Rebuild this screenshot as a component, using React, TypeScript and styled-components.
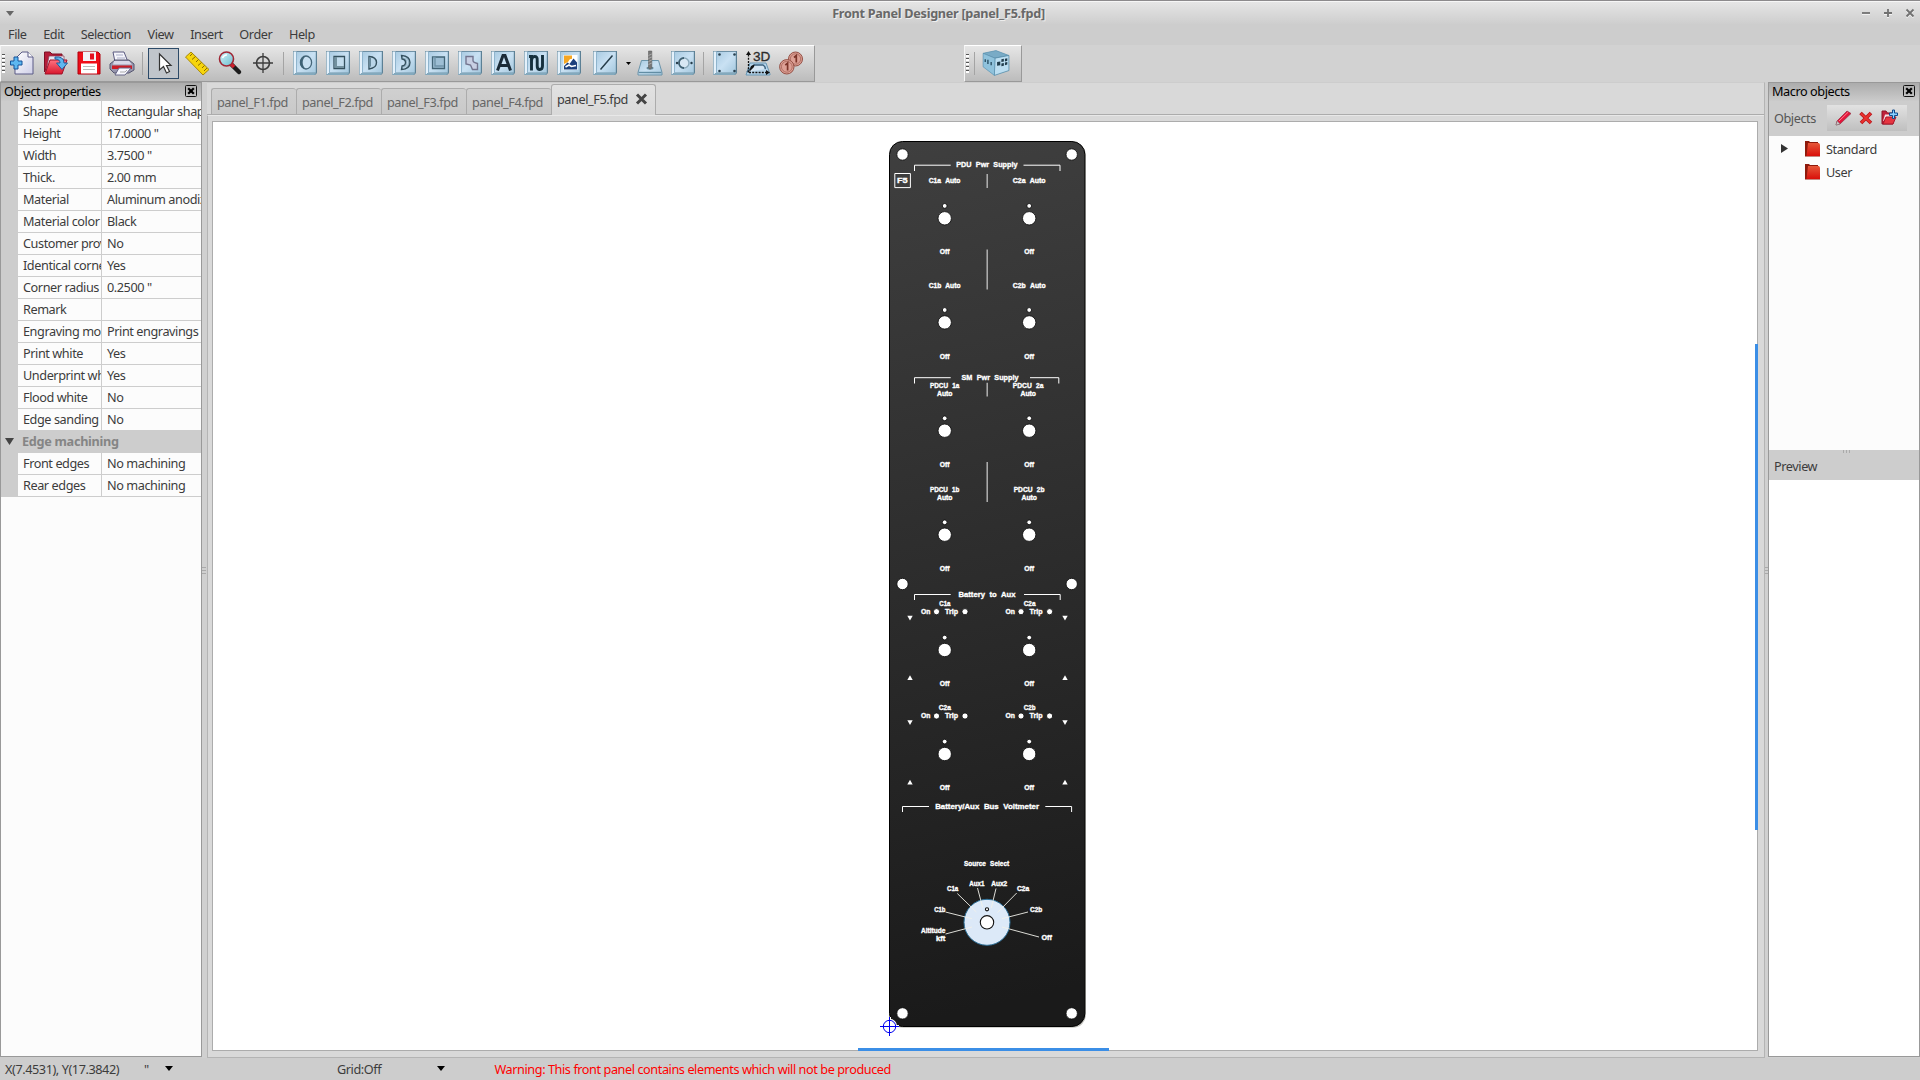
import React from 'react';
import styled, { createGlobalStyle, css } from 'styled-components';

const Global = createGlobalStyle`
  * { box-sizing: border-box; }
  body { margin: 0; background: #cdcdcd; overflow: hidden; }
`;

const Window = styled.div`
  width: 1920px;
  height: 1080px;
  display: flex;
  flex-direction: column;
  background: #cdcdcd;
  color: #3c3c3c;
  font: 12.7px/18px 'Noto Sans', 'Open Sans', sans-serif;
  letter-spacing: -0.43px;
  white-space: nowrap;
`;

const TitleBar = styled.header`
  height: 24px;
  flex: none;
  display: grid;
  grid-template-columns: 120px 1fr 163px;
  align-items: center;
  border-top: 1px solid #8c8a8c;
  box-shadow: inset 0 1px 0 #f6f6f6;
  background: linear-gradient(#e6e6e6, #cecece);
  padding-top: 1px;
`;
const TitleText = styled.h1`
  margin: 0;
  text-align: center;
  font-size: 12.7px;
  letter-spacing: -0.3px;
  line-height: 18px;
  font-weight: 700;
  color: #686868;
  text-shadow: 1px 1px 0 #efefef;
`;
const WindowButtons = styled.div`
  display: flex;
  justify-content: flex-end;
  gap: 12px;
  padding-right: 5px;
`;

const MenuBar = styled.nav`
  height: 21px;
  flex: none;
  display: flex;
  gap: 16.6px;
  padding: 1px 8px 0;
`;
const MenuItem = styled.span``;

const ToolArea = styled.div`
  height: 37px;
  flex: none;
  display: flex;
  gap: 149px;
  background: #d2d2d2;
`;
const ToolBar = styled.div<{ $width: number }>`
  width: ${(p) => p.$width}px;
  display: flex;
  align-items: center;
  border-top: 1px solid #fff;
  border-left: 1px solid #f4f4f4;
  border-right: 1px solid #999;
  border-bottom: 1px solid #999;
  background: linear-gradient(#e6e6e6, #bcbcbc);
  padding: 0 0 1px 1px;
`;
const Grip = styled.i`
  width: 3px;
  height: 19px;
  margin-right: 1px;
  background: repeating-linear-gradient(#555 0 1px, #fff 1px 3px, transparent 3px 4px);
`;
const Divider = styled.i<{ $space?: number }>`
  width: 1px;
  height: 23px;
  margin: 0 ${(p) => p.$space ?? 4}px;
  background: #a4a4a4;
`;
const ToolButton = styled.span<{ $active?: boolean; $width?: number }>`
  width: ${(p) => p.$width ?? 33}px;
  height: 31px;
  flex: none;
  display: flex;
  align-items: center;
  justify-content: center;
  ${(p) =>
    p.$active &&
    css`
      width: 31px;
      margin: 0 1px;
      border: 1px solid #2c4a68;
      background: #c0c5cb;
    `}
`;

const Main = styled.main`
  flex: 1;
  min-height: 0;
  display: grid;
  grid-template-columns: 202px 1563px 155px;
`;
const Dock = styled.section`
  height: 975px;
  display: flex;
  flex-direction: column;
  border: 1px solid #999;
  background: #fcfcfc;
  min-width: 0;
`;
const DockTitle = styled.h2`
  margin: 0;
  height: 18px;
  flex: none;
  display: flex;
  justify-content: space-between;
  align-items: center;
  padding: 0 4px 2px 3px;
  font-size: 12.7px;
  font-weight: 400;
  line-height: 16px;
  color: #000;
  background: linear-gradient(#acacac, #cbcbcb);
`;

const PropertyRow = styled.div`
  height: 22px;
  flex: none;
  display: grid;
  grid-template-columns: 17px 83px 1fr;
  background: #cdcdcd;
`;
const Cell = styled.span`
  overflow: hidden;
  padding-left: 5px;
  line-height: 20px;
  background: #fcfcfc;
  border-bottom: 1px solid #cdcdcd;
  & + & { border-left: 1px solid #cdcdcd; }
`;
const GroupRow = styled.div`
  height: 22px;
  flex: none;
  display: grid;
  grid-template-columns: 21px 1fr;
  line-height: 21px;
  font-weight: 700;
  letter-spacing: -0.3px;
  color: #858585;
  background: #cdcdcd;
`;
const GroupArrow = styled.span`
  padding: 7px 0 0 4px;
  line-height: 0;
`;

const Workspace = styled.section`
  display: grid;
  grid-template-columns: 5px 1558px;
  height: 976px;
  background: #d0d0d0;
`;
const SplitHandle = styled.span`
  align-self: center;
  width: 4px;
  height: 7px;
  background: repeating-linear-gradient(#aaa 0 1px, transparent 1px 3px);
`;
const Notebook = styled.div`
  display: flex;
  flex-direction: column;
  background: #d9d9d9;
  border-right: 1px solid #b4b4b4;
  border-bottom: 1px solid #b4b4b4;
  border-top: 1px solid #cdcdcd;
`;
const Tabs = styled.div`
  height: 32px;
  flex: none;
  display: flex;
  align-items: flex-end;
  padding-left: 4px;
  border-bottom: 1px solid #acacac;
`;
const Tab = styled.span<{ $current?: boolean }>`
  width: ${(p) => (p.$current ? 105 : 85)}px;
  height: ${(p) => (p.$current ? 31 : 26)}px;
  margin-bottom: ${(p) => (p.$current ? -1 : 0)}px;
  display: flex;
  align-items: center;
  gap: 7px;
  padding: 0 0 ${(p) => (p.$current ? 2 : 0)}px 5px;
  border: 1px solid #acacac;
  border-bottom: 0;
  border-right-width: ${(p) => (p.$current ? 1 : 0)}px;
  border-radius: 3px 3px 0 0;
  color: ${(p) => (p.$current ? '#3c3c3c' : '#666')};
  background: ${(p) => (p.$current ? 'linear-gradient(#e2e2e2, #d9d9d9)' : 'linear-gradient(#d0d0d0, #c9c9c9)')};
`;
const CanvasFrame = styled.div`
  flex: 1;
  padding: 5px 7px 6px 5px;
  border-left: 1px solid #b4b4b4;
  border-top: 1px solid #e8e8e8;
`;
const Canvas = styled.div`
  height: 930px;
  width: 1546px;
  margin-left: -1px;
  border: 1px solid #acacac;
  background: #fff;
  position: relative;
`;
const ScrollBar = styled.i<{ $vertical?: boolean }>`
  position: absolute;
  background: #3b8ee6;
  ${(p) => (p.$vertical ? 'right:-1px; top:222px; width:3px; height:486px;' : 'left:645px; bottom:-1px; width:251px; height:3px;')}
`;

const MacroWrap = styled.aside`
  display: grid;
  grid-template-columns: 3px 152px;
  background: #d0d0d0;
  height: 976px;
`;
const MacroTools = styled.div`
  height: 35px;
  flex: none;
  display: flex;
  align-items: center;
  justify-content: space-between;
  padding: 0 12px 2px 5px;
  background: #cdcdcd;
  color: #555;
`;
const MacroButtons = styled.div`
  width: 80px;
  height: 26px;
  display: flex;
  align-items: center;
  justify-content: space-around;
  padding: 0 4px;
  background: linear-gradient(#e2e2e2, #bfbfbf);
`;
const Tree = styled.div`
  height: 314px;
  flex: none;
  padding-top: 1px;
  background: #fcfcfc;
`;
const TreeRow = styled.div`
  height: 23px;
  display: grid;
  grid-template-columns: 36px 21px 1fr;
  align-items: center;
`;
const TreeArrow = styled.span`
  padding-left: 12px;
  line-height: 0;
`;
const PreviewHead = styled.div`
  height: 30px;
  flex: none;
  display: flex;
  flex-direction: column;
  padding-left: 5px;
  background: #cdcdcd;
`;
const PreviewGrip = styled.i`
  align-self: center;
  width: 7px;
  height: 3px;
  margin-bottom: 4px;
  background: repeating-linear-gradient(90deg, #aaa 0 1px, transparent 1px 3px);
`;
const Preview = styled.div`
  flex: 1;
  background: #fff;
`;

const StatusBar = styled.footer`
  height: 22px;
  flex: none;
  display: grid;
  grid-template-columns: 138px 35px 159px 100px 57.5px 1fr;
  align-items: center;
  padding: 0 0 1px 5px;
  line-height: 20px;
`;
const UnitSelect = styled.span`
  display: flex;
  align-items: center;
  justify-content: space-between;
  width: 30px;
  padding-left: 1px;
`;
const Warning = styled.span`
  color: #f00;
`;

const Tri = ({ w = 7, h = 5, right = false, color = '#000' }: { w?: number; h?: number; right?: boolean; color?: string }) => (
  <svg width={w} height={h} viewBox="0 0 10 10" preserveAspectRatio="none">
    <path d={right ? 'M0 0 10 5 0 10z' : 'M0 0H10L5 10z'} fill={color} />
  </svg>
);

const DockClose = () => (
  <svg width="12" height="12" viewBox="0 0 12 12">
    <rect x=".5" y=".5" width="11" height="11" rx="1" fill="none" stroke="#111" />
    <path d="M3.2 3.2l5.6 5.6M8.8 3.2 3.2 8.8" stroke="#000" strokeWidth="2.2" />
  </svg>
);

const Ico = ({ children, size = 26 }: { children: React.ReactNode; size?: number }) => (
  <svg width={size} height={size} viewBox="0 0 26 26">
    {children}
  </svg>
);

const Plate = ({ children }: { children: React.ReactNode }) => (
  <Ico>
    <path d="M1 1H25V23L23 25H1z" fill="#5c8095" />
    <path d="M1.5 1.5H4.5V22.5L1.5 25z" fill="#e4f1fb" />
    <path d="M1.5 25 4.5 22.5H24.5L22.5 25z" fill="#83a9bd" />
    <path d="M4.5 1.8H23.8V22.5H4.5z" fill="url(#plate)" />
    <path d="M4.5 1.8V22.5" stroke="#8fb4cd" />
    {children}
  </Ico>
);

const icons: Record<string, React.ReactNode> = {
  new: (
    <Ico>
      <path d="M12 2H18L23 7V24H5V9z" fill="url(#paper)" stroke="#5b5b86" />
      <path d="M18 2V7H23" fill="#fff" stroke="#5b5b86" />
      <path d="M4 7H8V11H12V15H8V19H4V15H.5V11H4z" fill="#5db7f0" stroke="#14539a" />
    </Ico>
  ),
  open: (
    <Ico>
      <path d="M1.5 22V2H7L9 4H19V8H8z" fill="#b51c38" stroke="#7d1025" />
      <path d="M3 22 6 6H21V10L8 12z" fill="#e9e9f4" stroke="#8a3a50" strokeWidth=".7" />
      <path d="M2 24 7 10H24L19 24z" fill="url(#red)" stroke="#a01028" />
      <path d="M12 7Q21 6 21 13H24.500L19 19.500 13.500 13H17Q17 9 12 9z" fill="#5fb7ef" stroke="#1e5c9c" />
    </Ico>
  ),
  save: (
    <Ico>
      <path d="M2 2H22L24 4V24H2z" fill="#ef0d18" stroke="#b0000c" />
      <path d="M7 2H20V11H7z" fill="#f2f2f6" />
      <path d="M14 3.500H18V9.500H14z" fill="#e51020" />
      <path d="M5 13.500H21V23.500H5z" fill="#fff" />
      <path d="M7 16.500H19M7 19.500H19" stroke="#bbb" />
    </Ico>
  ),
  print: (
    <Ico>
      <path d="M6 12 4 2H15L19 12z" fill="#f5f5fb" stroke="#5a5a80" />
      <path d="M7 5H14M8 8H16" stroke="#aaaec8" />
      <path d="M1 14 6 10H20L25 14V20L20 23H5L1 19z" fill="#9797ae" stroke="#55556e" />
      <path d="M5 11H20L23 14.500H4z" fill="#d8d8e8" />
      <path d="M3 15.500H23V19H3z" fill="#cc1c26" />
      <path d="M10 18H22L16 25H6z" fill="#f8f8ff" stroke="#666687" />
      <path d="M11 22H16L18 20" stroke="#aaa" fill="none" />
    </Ico>
  ),
  cursor: (
    <Ico>
      <path d="M8.500 4V20L12.500 16.500 15.500 23 18.500 21.500 15.500 15.500H20z" fill="#fff" stroke="#333" strokeWidth="1.200" />
    </Ico>
  ),
  ruler: (
    <Ico>
      <path d="M1.500 7 7 2 25 19.500 19 25z" fill="#f6d50d" stroke="#a9890a" />
      <path d="M8.500 3.500 6 6M11.500 6.500 8 9.500M14.500 9.500 12 12M17.500 12.500 14 15.500M20.500 15.500 18 18M23 18 20 21" stroke="#8a6c00" />
    </Ico>
  ),
  zoom: (
    <Ico>
      <path d="M14 14 22 22" stroke="#1c1c1c" strokeWidth="4.500" strokeLinecap="round" />
      <path d="M13.500 13.500 17 17" stroke="#d01e2c" strokeWidth="3.500" />
      <circle cx="9.500" cy="9" r="7" fill="url(#lens)" stroke="#a02634" strokeWidth="1.600" />
      <path d="M5.500 8Q7 4.500 10 5" stroke="#fff" strokeWidth="1.500" fill="none" />
    </Ico>
  ),
  target: (
    <Ico>
      <circle cx="13" cy="13" r="6.500" fill="none" stroke="#3c3c3c" strokeWidth="1.600" />
      <path d="M13 3V23M3 13H23" stroke="#3c3c3c" strokeWidth="1.300" />
    </Ico>
  ),
  circle: (
    <Plate>
      <ellipse cx="14" cy="12.500" rx="5.600" ry="6.500" fill="#c9e0f1" stroke="#456679" strokeWidth="1.300" />
      <path d="M14 6A6 6.500 0 0 0 14 19 8 8 0 0 1 14 6" fill="#3f6275" />
    </Plate>
  ),
  square: (
    <Plate>
      <path d="M9 6.500H19.500V18.500H9z" fill="#c2dced" stroke="#34505e" strokeWidth="1.300" />
      <path d="M9.500 7H12V16H19V18H9.500z" fill="#73919f" />
    </Plate>
  ),
  dshape: (
    <Plate>
      <path d="M11 6.500Q18.500 7 18.500 12.500T11 19z" fill="#b9d5e8" stroke="#34505e" strokeWidth="1.400" />
      <path d="M11 7V18.500L13 16V8z" fill="#68899b" />
    </Plate>
  ),
  arc: (
    <Plate>
      <path d="M10.500 5.500Q19 6 19 12.500T10.500 19.500L11 16Q14.500 15.500 14.500 12.500T11 9z" fill="#91b1c4" stroke="#34505e" strokeWidth="1.300" />
      <path d="M12 7Q17 8 16.500 13T12 18" fill="none" stroke="#c3dcec" strokeWidth="1" />
    </Plate>
  ),
  pocket: (
    <Plate>
      <path d="M8.500 7H20.500V18.500H8.500z" fill="#9dbed4" stroke="#426476" strokeWidth="1.300" />
      <path d="M9 7.500H11V16H20" stroke="#6f93a8" fill="none" strokeWidth="1.400" />
    </Plate>
  ),
  freeform: (
    <Plate>
      <path d="M9 6.500H16V10.500Q16 12.500 20.500 13.500V19.500H15.500L13.500 15 9 14z" fill="#c8cfe3" stroke="#73758f" strokeWidth="1.400" />
    </Plate>
  ),
  text: (
    <Plate>
      <path d="M7.500 20.500 13 5.500H15L20.500 20.500M9.500 15.500H18.500" fill="none" stroke="#1b2b38" strokeWidth="3" />
    </Plate>
  ),
  curve: (
    <Plate>
      <path d="M6 6.500H8.500V20.500M8.500 12Q8.500 6.500 11.500 6.500T14.200 10V16Q14.200 19.500 16.800 19.500T19.500 16V5" fill="none" stroke="#15303d" strokeWidth="2.900" />
    </Plate>
  ),
  image: (
    <Plate>
      <path d="M7.500 5H21.500V20H7.500z" fill="#fff" />
      <path d="M8 5.500H16V9Q14 8 12 12L8 14z" fill="#f5a623" />
      <path d="M8 19.500V16L11.500 12.500 13.500 14 17.500 8.500 21 12.500V19.500z" fill="#1c3f7c" />
      <path d="M9.500 17 13 15 15.500 16.500 20 15.500" stroke="#fff" strokeWidth="1.600" fill="none" />
    </Plate>
  ),
  line: (
    <Plate>
      <path d="M8.500 19.500 20.500 5.500" stroke="#263d4a" strokeWidth="1.500" />
    </Plate>
  ),
  drill: (
    <Ico>
      <path d="M4.500 10.500H21.500L25 22.500V25H1V22.500z" fill="url(#plate)" stroke="#6b94aa" />
      <path d="M1.500 22.500H24.500" stroke="#628da4" strokeWidth="1.400" />
      <ellipse cx="13" cy="18" rx="3.500" ry="1.500" fill="#68899a" />
      <path d="M11.500 1H14.800V17.500L13 19.500 11.500 17.500z" fill="#777" stroke="#555" strokeWidth=".5" />
      <path d="M11.500 5.500 14.800 4M11.500 8.500 14.800 7M11.500 11.500 14.800 10M11.500 14.500 14.800 13" stroke="#aaa" />
    </Ico>
  ),
  hole: (
    <Plate>
      <circle cx="14" cy="13" r="5" fill="#d8e8f4" stroke="#8aa9bb" strokeWidth="1.400" />
      <path d="M14 8A5 5 0 0 0 14 18" fill="none" stroke="#3f6072" strokeWidth="1.800" />
      <circle cx="7" cy="13" r="1.200" fill="#263d4a" />
      <circle cx="21.500" cy="13" r="1.200" fill="#263d4a" />
    </Plate>
  ),
  corners: (
    <Plate>
      <g fill="#29404f">
        <circle cx="7.500" cy="4.500" r="1.300" />
        <circle cx="22.500" cy="4.500" r="1.300" />
        <circle cx="7.500" cy="21" r="1.300" />
        <circle cx="22.500" cy="21" r="1.300" />
      </g>
    </Plate>
  ),
  threeD: (
    <Ico>
      <path d="M5 13H21L25 24V25H1z" fill="#b5d3e9" stroke="#6898b5" />
      <path d="M2 22 9 15H18Q21 17 20 19" fill="#d6e6f3" stroke="#3c6380" strokeWidth="1.500" />
      <path d="M3.500 22.500V4M4 22.500H22" stroke="#111" strokeWidth="1.300" strokeDasharray="2 1.200" />
      <path d="M3.500 1 6 5H1zM25 22.500 21 20V25zM4 22 9 17 9.500 14.500 6 16z" fill="#111" />
      <text x="8" y="10.600" fontFamily="Liberation Sans, sans-serif" fontSize="13.500" letterSpacing="0" fill="#2b2b2b" stroke="#2b2b2b" strokeWidth=".3">3D</text>
    </Ico>
  ),
  coins: (
    <Ico>
      <g fill="#dda095" stroke="#955045">
        <circle cx="17.500" cy="9" r="7" />
        <circle cx="17.500" cy="9" r="5.200" strokeWidth=".6" />
        <circle cx="8.800" cy="16.800" r="7.200" />
        <circle cx="8.800" cy="16.800" r="5.400" strokeWidth=".6" />
      </g>
      <path d="M16 7.500 18.300 5.500V12.500M7.300 15.200 9.600 13.200V20.500" fill="none" stroke="#7b3429" strokeWidth="1.700" />
    </Ico>
  ),
  box: (
    <Ico size={28}>
      <path d="M1 4 13 1.500 25 6V20L11.500 24.500 1 16.500z" fill="#82b9d4" />
      <path d="M1 4 13 1.500 25 6 12 8.500z" fill="#79abc6" stroke="#5e91ad" strokeWidth=".6" />
      <path d="M12 8.500 25 6V20L11.500 24.500z" fill="#bcdef1" stroke="#5489a6" strokeWidth=".7" />
      <path d="M1 4 12 8.500 11.500 24.500 1 16.500z" fill="#8fc2dc" stroke="#5489a6" strokeWidth=".5" />
      <path d="M14 12 17 11.500V15L14 15.500zM18 9.500 20.300 9V11.500L18 12zM21.300 9 23.500 8.500V11L21.300 11.500zM18 13.500 20.300 13V15.500L18 16zM21.300 12.500 23.500 12V14.500L21.300 15z" fill="#223d4c" />
      <path d="M3 9.500V12M5.500 10V14M8.500 12V15" stroke="#23485c" strokeWidth="1.200" />
    </Ico>
  ),
};

const MacroPencil = () => (
  <svg width="17" height="16" viewBox="0 0 17 16">
    <path d="M1 15 2 11 12 1 16 3.500 5 14z" fill="#e4153a" stroke="#8f3345" strokeWidth=".7" />
    <path d="M1 15 2.300 11 5 14z" fill="#ccc" stroke="#777" strokeWidth=".5" />
    <path d="M4 11 13 2.300" stroke="#ff7d90" />
  </svg>
);
const MacroDelete = () => (
  <svg width="14" height="14" viewBox="0 0 14 14">
    <path d="M1.500 2 12 12M12 2 2 12" stroke="#b91319" strokeWidth="3.600" />
    <path d="M2 2.500 11.500 11.500M11.500 2.500 2.500 11.500" stroke="#e9332f" strokeWidth="2" />
  </svg>
);
const MacroAdd = () => (
  <svg width="18" height="17" viewBox="0 0 18 17">
    <path d="M1 15V2H5L6.500 4H12V15z" fill="#c0203a" stroke="#8b1529" />
    <path d="M2 12 4 5.500H12V9z" fill="#f6dde2" />
    <path d="M2 15 5 8H15L12 15z" fill="#e63541" stroke="#a81a2d" />
    <path d="M11.500 1H13.500V4H16.500V6.500H13.500V9.500H11.500V6.500H8.500V4H11.500z" fill="#8bd0ff" stroke="#0d4a8e" />
  </svg>
);
const Folder = () => (
  <svg width="15" height="17" viewBox="0 0 15 17">
    <path d="M0 1H4L5 2H13V6H15V16.500H0z" fill="#8e1a0c" />
    <path d="M3 3H14L15 4.500V16H1.500z" fill="url(#folder)" />
  </svg>
);

const first = ['new', 'open', 'save', 'print'];
const second = ['cursor', 'ruler', 'zoom', 'target'];
const third = ['circle', 'square', 'dshape', 'arc', 'pocket', 'freeform', 'text', 'curve', 'image'];

const properties: [string, string][] = [
  ['Shape', 'Rectangular shape'],
  ['Height', '17.0000 "'],
  ['Width', '3.7500 "'],
  ['Thick.', '2.00 mm'],
  ['Material', 'Aluminum anodized'],
  ['Material color', 'Black'],
  ['Customer provided', 'No'],
  ['Identical corners', 'Yes'],
  ['Corner radius', '0.2500 "'],
  ['Remark', ''],
  ['Engraving mode', 'Print engravings'],
  ['Print white', 'Yes'],
  ['Underprint white', 'Yes'],
  ['Flood white', 'No'],
  ['Edge sanding', 'No'],
];
const edges: [string, string][] = [
  ['Front edges', 'No machining'],
  ['Rear edges', 'No machining'],
];

const Engraving = styled.text`
  font-family: 'Liberation Sans', Arial, sans-serif;
  font-weight: 700;
  letter-spacing: 0;
  word-spacing: 2.5px;
  fill: #fff;
  stroke: #fff;
  stroke-width: 0.35px;
`;

// left edge, right edge, vertical centre, text
type Label = [number, number, number, string];
const headings: Label[] = [
  [956.3, 1017.5, 164.6, 'PDU Pwr Supply'],
  [961.5, 1018.5, 377.3, 'SM Pwr Supply'],
  [958.5, 1015.5, 594.4, 'Battery to Aux'],
  [935.2, 1039, 806.2, 'Battery/Aux Bus Voltmeter'],
  [897, 907.6, 180.6, 'F5'],
];
const labels: Label[] = [
  [928.7, 960.5, 181, 'C1a Auto'],
  [1012.8, 1045.6, 181, 'C2a Auto'],
  [928.7, 960.5, 285.4, 'C1b Auto'],
  [1012.8, 1045.6, 285.4, 'C2b Auto'],
  [930, 959.3, 385.4, 'PDCU 1a'],
  [937, 952.5, 393.4, 'Auto'],
  [1012.8, 1043.5, 385.4, 'PDCU 2a'],
  [1020.5, 1036, 393.4, 'Auto'],
  [930, 959.3, 489.7, 'PDCU 1b'],
  [937, 952.5, 497.8, 'Auto'],
  [1013.7, 1044.5, 489.7, 'PDCU 2b'],
  [1021.5, 1037, 497.8, 'Auto'],
  [939.3, 950.5, 603.2, 'C1a'],
  [1023.7, 1035.5, 603.2, 'C2a'],
  [938.8, 951, 707.4, 'C2a'],
  [1023.7, 1035.5, 707.4, 'C2b'],
  [964, 1009.2, 863.2, 'Source Select'],
  [969.3, 984.4, 883.2, 'Aux1'],
  [991.2, 1007.2, 883.2, 'Aux2'],
  [947, 958.3, 888.9, 'C1a'],
  [1017, 1029.3, 888.9, 'C2a'],
  [934.2, 945.4, 910, 'C1b'],
  [1030, 1042.3, 910, 'C2b'],
  [921, 945.3, 931, 'Altitude'],
  [936, 945.3, 938.4, 'kft'],
  [1041.5, 1051.8, 937.7, 'Off'],
  ...[252, 356.4, 464.3, 568.6, 683.5, 787.6].flatMap((y): Label[] => [
    [939.8, 949.6, y, 'Off'],
    [1024.3, 1034.1, y, 'Off'],
  ]),
  ...[611.6, 716].flatMap((y): Label[] => [
    [921, 930.4, y, 'On'],
    [945, 958, y, 'Trip'],
    [1005.6, 1015, y, 'On'],
    [1029.5, 1042.5, y, 'Trip'],
  ]),
];

const PanelDrawing = styled.svg`
  display: block;
`;

const FrontPanel = () => (
  <PanelDrawing width="1544" height="928" viewBox="213 122 1544 928">
    <rect x="890" y="142.200" width="196" height="885.500" rx="13" fill="#c4c4bf" />
    <rect x="889.500" y="141.500" width="195.400" height="885" rx="13" fill="url(#panel)" stroke="#000" />
    <g fill="none" stroke="#fff" strokeWidth="1">
      <path d="M914.500 171V165.200H950.700M1023.500 165.200H1060V171" />
      <path d="M914.500 383.500V377.700H950.700M1030 377.700H1058.800V383.500" />
      <path d="M914.500 600V594.500H950.700M1024 594.500H1060.200V600" />
      <path d="M902.500 812V806.500H929M1045.300 806.500H1071.600V812" />
      <path d="M894.800 173.500H910.400V187.600H894.800z" />
    </g>
    <path d="M987.200 174V188M987.200 249.500V289.500M987.200 382.700V396.600M987.200 462V502" stroke="#b9b9b9" strokeWidth="1.400" />
    <g fill="#fff" stroke="#111" strokeWidth=".9">
      {[154.500, 584, 1013.400].flatMap((y) => [902.500, 1071.700].map((x) => <circle key={`${x}${y}`} cx={x} cy={y} r="5.700" />))}
      {[218.300, 322.400, 430.700, 534.700, 650, 754].flatMap((y) =>
        [944.700, 1029.200].map((x) => (
          <g key={`${x}${y}`}>
            <circle cx={x} cy={y} r="6.700" />
            <circle cx={x} cy={y - 12.400} r="2.400" />
          </g>
        )),
      )}
      {[611.700, 716].flatMap((y) => [936.500, 965, 1021, 1049.600].map((x) => <circle key={`${x}${y}`} cx={x} cy={y} r="3.100" />))}
    </g>
    <g fill="#fff">
      {[910, 1065].flatMap((x) => [
        <path key={`a${x}`} d={`M${x - 2.700} 615.800h5.400l-2.700 4.700z`} />,
        <path key={`b${x}`} d={`M${x - 2.700} 720.200h5.400l-2.700 4.700z`} />,
        <path key={`c${x}`} d={`M${x - 2.700} 680h5.400l-2.700-4.700z`} />,
        <path key={`d${x}`} d={`M${x - 2.700} 784.500h5.400l-2.700-4.700z`} />,
      ])}
    </g>
    <circle cx="987" cy="922.300" r="23" fill="#dce9f8" stroke="#2d7099" />
    <path
      d="M977.500 888 982.700 907.500M996 888.500 991.300 908M957.300 893.500 976.300 912M1016.700 893 997.500 912.500M945.500 912 972 918.700M1028 912 1002 918.700M945.500 934 972 927M1039 937 1002 927"
      stroke="#f1f1ea"
      strokeWidth=".9"
    />
    <circle cx="987" cy="922.300" r="6.700" fill="#fff" stroke="#111" strokeWidth="1.100" />
    <circle cx="987" cy="909.300" r="1.600" fill="#fff" stroke="#111" strokeWidth="1.100" />
    {headings.map(([x, r, y, t]) => (
      <Engraving key={t} x={x} y={y + 2.700} fontSize="8" textLength={r - x} lengthAdjust="spacingAndGlyphs">{t}</Engraving>
    ))}
    {labels.map(([x, r, y, t], i) => (
      <Engraving key={i} x={x} y={y + 2.300} fontSize="6.900" textLength={r - x} lengthAdjust="spacingAndGlyphs">{t}</Engraving>
    ))}
    <g fill="none">
      <g stroke="#fff" strokeWidth="3">
        <circle cx="889.500" cy="1026.500" r="6.200" />
        <path d="M880 1026.500H899M889.500 1017V1036" />
      </g>
      <g stroke="#0000f0" strokeWidth="1">
        <circle cx="889.500" cy="1026.500" r="6.200" />
        <path d="M880 1026.500H899M889.500 1017V1036" />
      </g>
    </g>
  </PanelDrawing>
);

const GradientDefs = styled.svg`
  position: absolute;
`;
const Gradients = () => (
  <GradientDefs width="0" height="0">
    <defs>
      <linearGradient id="plate" x2="1" y2="1"><stop stopColor="#a9cbe2" /><stop offset=".5" stopColor="#c9e1f3" /><stop offset="1" stopColor="#a5c8de" /></linearGradient>
      <linearGradient id="paper" x2="1" y2="1"><stop stopColor="#fff" /><stop offset="1" stopColor="#cfcfe8" /></linearGradient>
      <linearGradient id="red" x2="0" y2="1"><stop stopColor="#ff7382" /><stop offset="1" stopColor="#d8162c" /></linearGradient>
      <linearGradient id="lens" x2="1" y2="1"><stop stopColor="#d2f4fa" /><stop offset="1" stopColor="#6cbccd" /></linearGradient>
      <linearGradient id="folder" x2="0" y2="1"><stop stopColor="#e6583a" /><stop offset="1" stopColor="#d90f0a" /></linearGradient>
      <linearGradient id="panel" x2=".05" y2="1"><stop stopColor="#3f3f3f" /><stop offset="1" stopColor="#1a1a1a" /></linearGradient>
    </defs>
  </GradientDefs>
);

const Rows = ({ items }: { items: [string, string][] }) => (
  <>
    {items.map(([name, value]) => (
      <PropertyRow key={name}>
        <span />
        <Cell>{name}</Cell>
        <Cell>{value}</Cell>
      </PropertyRow>
    ))}
  </>
);

const Buttons = ({ names }: { names: string[] }) => (
  <>
    {names.map((n) => (
      <ToolButton key={n} $active={n === 'cursor'}>{icons[n]}</ToolButton>
    ))}
  </>
);

const TitleArrow = styled.span`
  padding-left: 6px;
  line-height: 0;
`;

export default function App() {
  return (
    <Window>
      <Global />
      <Gradients />
      <TitleBar>
        <TitleArrow><Tri w={8} h={5} color="#666" /></TitleArrow>
        <TitleText>Front Panel Designer [panel_F5.fpd]</TitleText>
        <WindowButtons>
          {['M1 5H9', 'M1 5H9M5 1V9', 'M1.500 1.500 8.500 8.500M8.500 1.500 1.500 8.500'].map((d) => (
            <svg key={d} width="10" height="10" viewBox="0 0 10 10">
              <path d={d} transform="translate(0 1)" stroke="#f4f4f4" strokeWidth="1.800" />
              <path d={d} stroke="#717171" strokeWidth="1.800" />
            </svg>
          ))}
        </WindowButtons>
      </TitleBar>
      <MenuBar>
        {['File', 'Edit', 'Selection', 'View', 'Insert', 'Order', 'Help'].map((m) => <MenuItem key={m}>{m}</MenuItem>)}
      </MenuBar>
      <ToolArea>
        <ToolBar $width={815}>
          <Grip />
          <Buttons names={first} />
          <Divider />
          <Buttons names={second} />
          <Divider />
          <Buttons names={third} />
          <ToolButton $width={39}>{icons.line}</ToolButton>
          <ToolButton $width={9}><Tri w={5} h={3} /></ToolButton>
          <Buttons names={['drill', 'hole']} />
          <Divider />
          <Buttons names={['corners', 'threeD', 'coins']} />
        </ToolBar>
        <ToolBar $width={58}>
          <Grip />
          <Divider />
          <ToolButton>{icons.box}</ToolButton>
        </ToolBar>
      </ToolArea>
      <Main>
        <Dock>
          <DockTitle>Object properties<DockClose /></DockTitle>
          <Rows items={properties} />
          <GroupRow>
            <GroupArrow><Tri w={9} h={7} color="#444" /></GroupArrow>
            Edge machining
          </GroupRow>
          <Rows items={edges} />
        </Dock>
        <Workspace>
          <SplitHandle />
          <Notebook>
            <Tabs>
              {[1, 2, 3, 4].map((n) => <Tab key={n}>{`panel_F${n}.fpd`}</Tab>)}
              <Tab $current>
                panel_F5.fpd
                <svg width="13" height="12" viewBox="0 0 13 12">
                  <path d="M2 1.500 11 10.500M11 1.500 2 10.500" stroke="#444" strokeWidth="3" />
                </svg>
              </Tab>
            </Tabs>
            <CanvasFrame>
              <Canvas>
                <FrontPanel />
                <ScrollBar $vertical />
                <ScrollBar />
              </Canvas>
            </CanvasFrame>
          </Notebook>
        </Workspace>
        <MacroWrap>
          <SplitHandle />
          <Dock>
            <DockTitle>Macro objects<DockClose /></DockTitle>
            <MacroTools>
              Objects
              <MacroButtons><MacroPencil /><MacroDelete /><MacroAdd /></MacroButtons>
            </MacroTools>
            <Tree>
              <TreeRow><TreeArrow><Tri w={7} h={9} right color="#333" /></TreeArrow><Folder />Standard</TreeRow>
              <TreeRow><span /><Folder />User</TreeRow>
            </Tree>
            <PreviewHead><PreviewGrip />Preview</PreviewHead>
            <Preview />
          </Dock>
        </MacroWrap>
      </Main>
      <StatusBar>
        <span>X(7.4531), Y(17.3842)</span>
        <UnitSelect>"<Tri w={8} h={5} /></UnitSelect>
        <span />
        <span>Grid:Off</span>
        <Tri w={8} h={5} />
        <Warning>Warning: This front panel contains elements which will not be produced</Warning>
      </StatusBar>
    </Window>
  );
}
